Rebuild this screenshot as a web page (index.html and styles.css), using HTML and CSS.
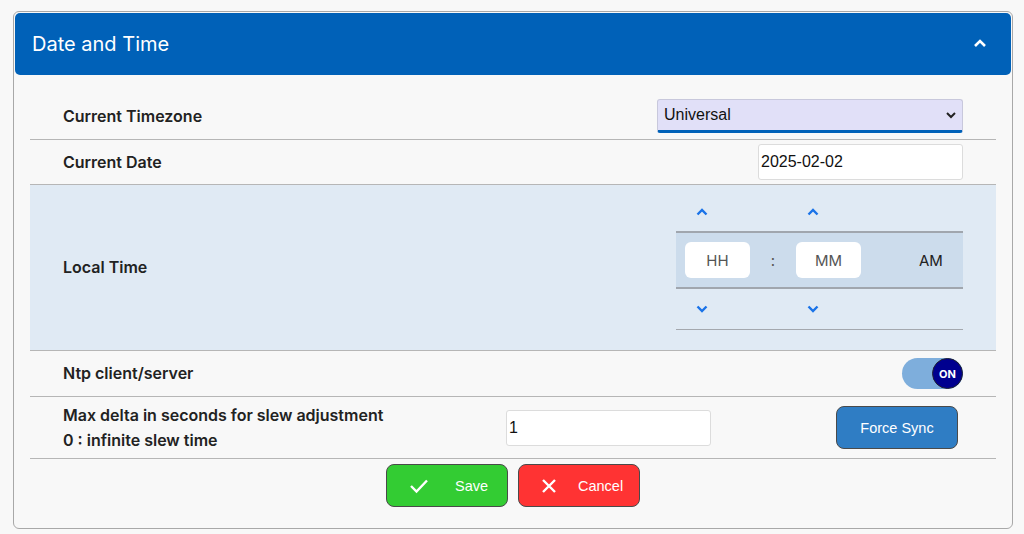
FILE: index.html
```html
<!DOCTYPE html>
<html lang="en">
<head>
  <meta charset="UTF-8">
  <meta name="viewport" content="width=device-width, initial-scale=1.0">
  <title>Date and Time</title>
  <link rel="stylesheet" href="styles.css">
</head>
<body>
  <div class="card">
    <div class="card-header">
      <h2>Date and Time</h2>
      <svg class="collapse" width="14" height="10" viewBox="0 0 14 10"><path d="M2 8 L7 3 L12 8" fill="none" stroke="#fff" stroke-width="2.6"/></svg>
    </div>

    <div class="card-body">
      <div class="row row-tz">
        <label>Current Timezone</label>
        <div class="select">
          <span>Universal</span>
          <svg width="12" height="8" viewBox="0 0 12 8"><path d="M2 2 L6 6 L10 2" fill="none" stroke="#222" stroke-width="2"/></svg>
        </div>
      </div>

      <div class="row row-date">
        <label>Current Date</label>
        <input class="date-input" type="text" value="2025-02-02">
      </div>

      <div class="row row-time">
        <label>Local Time</label>
        <div class="timepicker">
          <div class="tp-arrows">
            <svg class="arr arr-h" width="14" height="10" viewBox="0 0 14 10"><path d="M2.5 7.5 L7 3 L11.5 7.5" fill="none" stroke="#1a73e8" stroke-width="2.4"/></svg>
            <svg class="arr arr-m" width="14" height="10" viewBox="0 0 14 10"><path d="M2.5 7.5 L7 3 L11.5 7.5" fill="none" stroke="#1a73e8" stroke-width="2.4"/></svg>
          </div>
          <div class="tp-band">
            <div class="tp-box">HH</div>
            <span class="tp-colon">:</span>
            <div class="tp-box">MM</div>
            <span class="tp-ampm">AM</span>
          </div>
          <div class="tp-arrows tp-down">
            <svg class="arr arr-h" width="14" height="10" viewBox="0 0 14 10"><path d="M2.5 2.5 L7 7 L11.5 2.5" fill="none" stroke="#1a73e8" stroke-width="2.4"/></svg>
            <svg class="arr arr-m" width="14" height="10" viewBox="0 0 14 10"><path d="M2.5 2.5 L7 7 L11.5 2.5" fill="none" stroke="#1a73e8" stroke-width="2.4"/></svg>
          </div>
        </div>
      </div>

      <div class="row row-ntp">
        <label>Ntp client/server</label>
        <div class="toggle"><span class="knob">ON</span></div>
      </div>

      <div class="row row-slew">
        <label>Max delta in seconds for slew adjustment<br>0 : infinite slew time</label>
        <input class="slew-input" type="text" value="1">
        <button class="btn btn-sync">Force Sync</button>
      </div>

      <div class="actions">
        <button class="btn btn-save">
          <svg width="20" height="16" viewBox="0 0 20 16"><path d="M2 8 L7.5 13.5 L18 2.5" fill="none" stroke="#fff" stroke-width="2.4"/></svg>
          <span>Save</span>
        </button>
        <button class="btn btn-cancel">
          <svg width="16" height="16" viewBox="0 0 16 16"><path d="M2 2 L14 14 M14 2 L2 14" fill="none" stroke="#fff" stroke-width="2.4"/></svg>
          <span>Cancel</span>
        </button>
      </div>
    </div>
  </div>
</body>
</html>
```

FILE: styles.css
```css
body {
  margin: 0;
  background: #f8f8f8;
  font-family: Inter, "Noto Sans", sans-serif;
  color: #222;
}

.card {
  margin: 11px 0 0 13px;
  width: 1000px;
  height: 518px;
  border: 1px solid #a8a8a8;
  border-radius: 6px;
  padding: 1px;
  box-sizing: border-box;
  background: #f8f8f8;
}

.card-header {
  height: 62px;
  background: #0061b8;
  border-radius: 5px;
  display: flex;
  align-items: center;
  justify-content: space-between;
  padding: 0 24px 0 17px;
}
.card-header h2 {
  margin: 0;
  color: #fff;
  font-size: 20px;
  font-weight: 400;
  padding-top: 0;
}
.collapse { margin-top: -3px; }

.card-body {
  padding: 18px 15px 0 15px;
}

.row {
  display: flex;
  align-items: center;
  border-bottom: 1.5px solid #b6b6b6;
  padding: 0 33px;
}
.row label {
  font-size: 16px;
  font-weight: 600;
  color: #222;
  line-height: 25px;
}

.row-tz { height: 46px; justify-content: space-between; }
.select {
  width: 306px;
  height: 34px;
  box-sizing: border-box;
  background: #e1e0f8;
  border: 1px solid #c8c8dc;
  border-bottom: 3px solid #0061b8;
  border-radius: 3px;
  display: flex;
  align-items: center;
  justify-content: space-between;
  padding: 0 5px 0 6px;
  font-family: "Liberation Sans", Arial, sans-serif;
  font-size: 16px;
  color: #111;
}

.row-date { height: 44px; justify-content: space-between; }
.date-input {
  width: 205px;
  height: 36px;
  box-sizing: border-box;
  border: 1px solid #dcdcdc;
  border-radius: 3px;
  background: #fff;
  font-family: "Liberation Sans", Arial, sans-serif;
  font-size: 16px;
  color: #111;
  padding: 0 2px;
}

.row-time {
  height: 166px;
  box-sizing: border-box;
  background: #e0eaf4;
  justify-content: space-between;
  align-items: center;
}
.timepicker {
  align-self: flex-start;
  margin-top: 7px;
  width: 287px;
}
.tp-arrows {
  height: 39px;
  display: flex;
  align-items: center;
}
.tp-down {
  height: 40px;
  border-bottom: 1.5px solid #a4a8ae;
}
.arr-h { margin-left: 19px; }
.arr-m { margin-left: 97px; }
.tp-band {
  height: 54px;
  background: #ccdcec;
  border-top: 2px solid #a0a6ae;
  border-bottom: 2px solid #a0a6ae;
  display: flex;
  align-items: center;
  padding-left: 9px;
}
.tp-box {
  width: 65px;
  height: 36px;
  background: #fff;
  border-radius: 6px;
  display: flex;
  align-items: center;
  justify-content: center;
  font-size: 15px;
  color: #555;
}
.tp-colon {
  width: 46px;
  text-align: center;
  font-size: 15px;
  color: #555;
}
.tp-ampm {
  margin-left: 58px;
  font-size: 15px;
  color: #222;
}

.row-ntp { height: 45px; justify-content: space-between; }
.toggle {
  width: 61px;
  height: 31px;
  border-radius: 16px;
  background: #7eaedc;
  position: relative;
}
.knob {
  position: absolute;
  right: 0;
  top: 0;
  width: 29px;
  height: 29px;
  border-radius: 50%;
  background: #00008f;
  border: 1px solid #223;
  color: #fff;
  font-size: 11px;
  font-weight: 700;
  display: flex;
  align-items: center;
  justify-content: center;
}

.row-slew { height: 61px; padding-right: 38px; }
.row-slew label { width: 443px; }
.slew-input {
  width: 205px;
  height: 36px;
  box-sizing: border-box;
  border: 1px solid #dcdcdc;
  border-radius: 3px;
  background: #fff;
  font-family: "Liberation Sans", Arial, sans-serif;
  font-size: 16px;
  color: #111;
  padding: 0 2px;
}

.btn {
  width: 122px;
  height: 43px;
  border: 1.5px solid #4a4a4a;
  border-radius: 8px;
  color: #fff;
  font-family: "Liberation Sans", Arial, sans-serif;
  font-size: 14.5px;
  cursor: pointer;
}
.btn-sync {
  margin-left: auto;
  background: #2f7dc4;
}

.actions {
  display: flex;
  justify-content: center;
  gap: 10px;
  padding-top: 5px;
}
.btn-save, .btn-cancel {
  display: flex;
  align-items: center;
  padding: 0 0 0 22px;
}
.btn-save { background: #33cc33; }
.btn-cancel { background: #ff3333; }
.btn-save span { margin-left: 26px; }
.btn-cancel { padding-left: 22px; }
.btn-cancel span { margin-left: 21px; }
```
